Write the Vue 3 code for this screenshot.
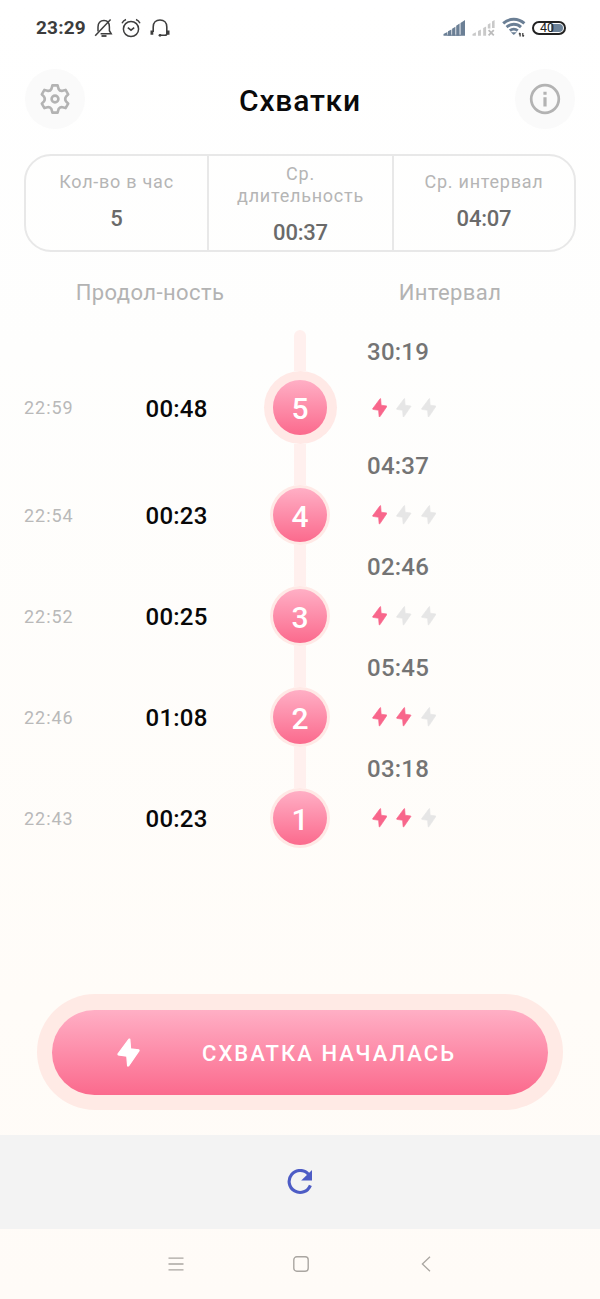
<script setup>
const stats = [
  { lines: ['Кол-во в час'], value: '5' },
  { lines: ['Ср.', 'длительность'], value: '00:37' },
  { lines: ['Ср. интервал'], value: '04:07' }
]

const rows = [
  { n: 5, time: '22:59', duration: '00:48', interval: '30:19', power: 1 },
  { n: 4, time: '22:54', duration: '00:23', interval: '04:37', power: 1 },
  { n: 3, time: '22:52', duration: '00:25', interval: '02:46', power: 1 },
  { n: 2, time: '22:46', duration: '01:08', interval: '05:45', power: 2 },
  { n: 1, time: '22:43', duration: '00:23', interval: '03:18', power: 2 }
]

const boltPath = 'M12 1 L.9 16 L1.2 16.9 L9.8 18.2 L10.6 28 L11.6 28 L22.1 12.6 L21.8 11.8 L13.6 10.8 L12.8 1 Z'
</script>

<template>
  <div class="screen">
    <div class="status">
      <span class="clock">23:29</span>
      <svg class="bell" width="20" height="20" viewBox="0 0 20 20" fill="none" stroke="#3e3e3e" stroke-width="1.5">
        <path d="M4 13.6V9C4 5 6.2 2.6 10 2.6S15.4 5 15.4 9v3.7l1.8 3.1H6.6" />
        <path d="M1.2 17.8 16.6 1.4" />
        <path d="M7.5 18h5" stroke-width="1.8" />
      </svg>
      <svg class="alarm" width="20" height="20" viewBox="0 0 20 20" fill="none" stroke="#3e3e3e" stroke-width="1.5">
        <circle cx="10" cy="11" r="7.6" />
        <path d="M6.8 9.6 10 12.2l3.2-2.6M1 5.2Q2.2 2.6 5 1.5M19 5.2Q17.8 2.6 15 1.5" />
      </svg>
      <svg class="headset" width="20" height="20" viewBox="0 0 20 20" fill="none" stroke="#3e3e3e" stroke-width="1.6">
        <path d="M3.2 14V9C3.2 4.6 6 2 10 2s6.8 2.6 6.8 7v6.7c0 1-.6 1.6-1.8 1.6h-5" />
        <path d="M1.9 12.6v4.2M18.1 12.6v4.2" stroke-width="2.8" />
        <circle cx="10" cy="17.3" r="1.4" fill="#3e3e3e" stroke="none" />
      </svg>
      <span class="gap"></span>
      <svg class="signal" width="23" height="18" viewBox="0 0 23 18" fill="#6b7f95">
        <path d="M.5 15 4.4 13v3.8H.5zM5 12.3l3.4-1.8v6.3H5zM9.1 9.7l3.3-2v9.1H9.1zM13.2 6.8l3.4-2.3v12.3h-3.4zM17.5 3.9l4.5-3v15.9h-4.5z" />
        <path d="M4 16.2h14" stroke="#6b7f95" />
      </svg>
      <svg class="signal-off" width="24" height="18" viewBox="0 0 24 18" fill="#c9c9c9">
        <path d="M.5 15 3.9 13.2v3.6H.5zM6 12l2.9-1.6v6.4H6zM11.2 9.1l2.9-1.7v9.4h-2.9zM15.8 5.6l2.6-1.6v5.6h-2.6zM20 2.6l2.6-1.7V9H20z" />
        <path d="m16.6 11.2 5.2 5.2M21.8 11.2l-5.2 5.2" stroke="#bcbcbc" stroke-width="1.8" />
      </svg>
      <svg class="wifi" width="24" height="21" viewBox="0 0 24 21" fill="none" stroke="#6b7f95" stroke-width="2.9">
        <path d="M1.2 6.4C7.3.8 16.3.8 22.4 6.4M4.6 10.1c4.2-3.8 10.2-3.8 14.4 0M7.9 13.6c2.3-2 5.5-2 7.8 0" />
        <path d="M8.8 15.2h6l-3 2.8z" fill="#6b7f95" stroke="none" />
        <path d="M18.1 19.6V16M17 17.4l1.1-1.4M20.8 16v3.6M21.9 18.2l-1.1 1.4" stroke="#3e3e3e" stroke-width="1.3" />
      </svg>
      <span class="battery"><span class="charge"></span><span class="percent">40</span></span>
    </div>

    <header class="head">
      <button class="round">
        <svg width="32" height="32" viewBox="0 0 32 32" fill="none" stroke="#b3b3b3" stroke-width="2.6" stroke-linejoin="round">
          <path d="M13.4 2.4h5.2l1 3.6q1.4 2.4 4 1.7l3-.8 2.6 4.4-2.2 2.3q-1.6 2.4 0 4.8l2.2 2.3-2.6 4.4-3-.8q-2.6-.7-4 1.7l-1 3.6h-5.2l-1-3.6q-1.4-2.4-4-1.7l-3 .8-2.6-4.4L5 18.4q1.6-2.4 0-4.8l-2.2-2.3 2.6-4.4 3 .8q2.6.7 4-1.7z" />
          <circle cx="16" cy="16" r="3.4" />
        </svg>
      </button>
      <h1 class="title">Схватки</h1>
      <button class="round">
        <svg width="32" height="32" viewBox="0 0 32 32" fill="none" stroke="#b3b3b3">
          <circle cx="16" cy="16" r="13.8" stroke-width="2.7" />
          <path d="M16 14.2v9.3M16 8.8v3" stroke-width="3.2" />
        </svg>
      </button>
    </header>

    <section class="stats">
      <div v-for="(s, i) in stats" :key="i" class="stat">
        <div class="label"><div v-for="l in s.lines" :key="l">{{ l }}</div></div>
        <div class="value">{{ s.value }}</div>
      </div>
    </section>

    <div class="columns">
      <span>Продол-ность</span>
      <span>Интервал</span>
    </div>

    <section class="timeline">
      <div v-for="(r, i) in rows" :key="r.n" class="row" :class="{ first: i === 0 }">
        <div class="interval">{{ r.interval }}</div>
        <div class="rail" :class="{ start: i === 0 }"></div>
        <div class="time">{{ r.time }}</div>
        <div class="duration">{{ r.duration }}</div>
        <div class="ring"><div class="node">{{ r.n }}</div></div>
        <div class="bolts">
          <svg v-for="k in 3" :key="k" width="15.5" height="19.5" viewBox="0 0 23 29" :class="k <= r.power ? 'on' : 'off'">
            <path :d="boltPath" stroke-width="1" stroke-linejoin="round" />
          </svg>
        </div>
      </div>
    </section>

    <button class="start-btn">
      <span class="pill">
        <svg width="23" height="29" viewBox="0 0 23 29" fill="#fff" stroke="#fff">
          <path :d="boltPath" stroke-width="1.2" stroke-linejoin="round" />
        </svg>
        <span class="caption">СХВАТКА НАЧАЛАСЬ</span>
      </span>
    </button>

    <div class="reload">
      <svg width="26" height="26" viewBox="0 0 26 26">
        <path d="M21.4 5.2A11 11 0 1 0 23.4 16.4" fill="none" stroke="#4d5cc5" stroke-width="3.1" />
        <path d="M25 1v10.6H14.2z" fill="#4d5cc5" />
      </svg>
    </div>

    <nav class="nav">
      <svg width="16" height="16" viewBox="0 0 16 16" stroke="#aaa6a1" stroke-width="1.3"><path d="M.5 2.2h15M.5 8h15M.5 13.8h15" /></svg>
      <svg width="16" height="16" viewBox="0 0 16 16" fill="none" stroke="#aaa6a1" stroke-width="1.4"><rect x=".8" y=".8" width="14.4" height="14.4" rx="3" /></svg>
      <svg width="16" height="16" viewBox="0 0 16 16" fill="none" stroke="#aaa6a1" stroke-width="1.3"><path d="M12 .8 4.4 8l7.6 7.2" /></svg>
    </nav>
  </div>
</template>

<style>
body { margin: 0; }
</style>

<style scoped>
.screen {
  width: 600px;
  height: 1299px;
  box-sizing: border-box;
  overflow: hidden;
  display: flex;
  flex-direction: column;
  font-family: Roboto, "Liberation Sans", sans-serif;
  background: linear-gradient(#ffffff 0, #fefefd 350px, #fffcf8 1000px, #fffbf7 100%);
}
button { border: 0; padding: 0; font-family: inherit; }
svg { display: block; flex: none; }

.status {
  height: 55px;
  padding: 0 34px 0 36px;
  box-sizing: border-box;
  display: flex;
  align-items: center;
}
.clock { font-size: 19px; font-weight: 700; letter-spacing: 0.2px; color: #3c3c3c; width: 58px; }
.bell { margin-right: 7px; }
.alarm { margin-right: 9px; }
.gap { flex: 1; }
.signal { margin-right: 6px; }
.signal-off { margin-right: 6px; }
.wifi { margin-right: 6px; }
.battery {
  width: 34px;
  height: 14px;
  box-sizing: border-box;
  border: 2px solid #222;
  border-radius: 7px;
  display: grid;
  align-items: center;
}
.charge {
  grid-area: 1 / 1;
  justify-self: end;
  width: 12px;
  height: 8px;
  margin-right: 1px;
  border-radius: 0 5px 5px 0;
  background: #6d8399;
}
.percent { grid-area: 1 / 1; padding-left: 6px; font-size: 12.5px; line-height: 10px; color: #222; }

.head {
  height: 99px;
  padding: 14px 25px 0;
  box-sizing: border-box;
  display: flex;
  justify-content: space-between;
  align-items: flex-start;
}
.round {
  width: 60px;
  height: 60px;
  border-radius: 50%;
  background: #fafafa;
  display: flex;
  align-items: center;
  justify-content: center;
}
.title { margin: 0; font-size: 30px; line-height: 64px; font-weight: 500; letter-spacing: 0.8px; color: #0a0a0a; }

.stats {
  height: 98px;
  margin: 0 24px;
  box-sizing: border-box;
  border: 2px solid #e8e8e8;
  border-radius: 27px;
  display: grid;
  grid-template-columns: 181px 187px 1fr;
}
.stat { display: flex; flex-direction: column; align-items: center; text-align: center; padding-top: 15px; }
.stat:nth-child(2) { border: solid #e8e8e8; border-width: 0 2px; padding-top: 7px; }
.label { font-size: 18px; line-height: 22px; letter-spacing: 0.75px; color: #b5b5b5; }
.value { margin-top: 13px; font-size: 22px; line-height: 26px; font-weight: 500; letter-spacing: -0.2px; color: #6a6a6a; }

.columns {
  height: 78px;
  box-sizing: border-box;
  padding-top: 28px;
  display: grid;
  grid-template-columns: 1fr 1fr;
  text-align: center;
  font-size: 22px;
  line-height: 26px;
  letter-spacing: 0.42px;
  color: #b3b3b3;
}

.timeline { height: 664px; }
.row {
  display: grid;
  grid-template-columns: 145.5px 117.5px 74px 30px 1fr;
  grid-template-rows: 41px 60px;
  align-items: center;
}
.row.first { grid-template-rows: 41px 73px; }
.interval {
  grid-area: 1 / 5;
  padding-top: 3px;
  font-size: 24px;
  line-height: 28px;
  font-weight: 500;
  letter-spacing: 0.25px;
  color: #747474;
}
.rail { grid-area: 1 / 3; justify-self: center; align-self: stretch; width: 12px; background: #fff0ee; }
.rail.start { border-radius: 6px 6px 0 0; }
.time { grid-area: 2 / 1; padding-left: 24px; font-size: 18px; letter-spacing: 0.95px; color: #b9b9b9; }
.duration { grid-area: 2 / 2; padding-top: 2px; font-size: 24px; font-weight: 500; letter-spacing: 0.25px; color: #080808; }
.ring {
  grid-area: 2 / 3;
  justify-self: center;
  width: 60px;
  height: 60px;
  border-radius: 50%;
  background: #ffe9e6;
  display: flex;
  align-items: center;
  justify-content: center;
}
.first .ring { width: 73px; height: 73px; }
.node {
  width: 54.5px;
  height: 54.5px;
  border-radius: 50%;
  background: linear-gradient(#ffafc5, #fb6a8d);
  color: #fff;
  font-size: 30px;
  font-weight: 500;
  line-height: 57px;
  text-align: center;
}
.bolts { grid-area: 2 / 5; display: flex; gap: 9px; padding-left: 4.5px; }
.on { fill: #f8668b; stroke: #f8668b; }
.off { fill: #e6e6e6; stroke: #e6e6e6; }

.start-btn {
  width: 526px;
  height: 116px;
  margin-left: 37px;
  border-radius: 58px;
  background: #ffeae5;
  display: flex;
  align-items: center;
  justify-content: center;
}
.pill {
  width: 496px;
  height: 85px;
  box-sizing: border-box;
  padding-left: 65px;
  border-radius: 43px;
  background: linear-gradient(#ffafc5, #fb6a8d);
  display: flex;
  align-items: center;
}
.caption { margin-left: 62px; padding-top: 3px; font-size: 22px; font-weight: 500; letter-spacing: 2.05px; color: #fff; white-space: nowrap; }

.reload {
  height: 94px;
  margin-top: 25px;
  display: flex;
  align-items: center;
  justify-content: center;
  background: #f3f3f3;
}
.nav {
  height: 70px;
  padding: 0 166px 0 168px;
  display: flex;
  align-items: center;
  justify-content: space-between;
}
</style>
